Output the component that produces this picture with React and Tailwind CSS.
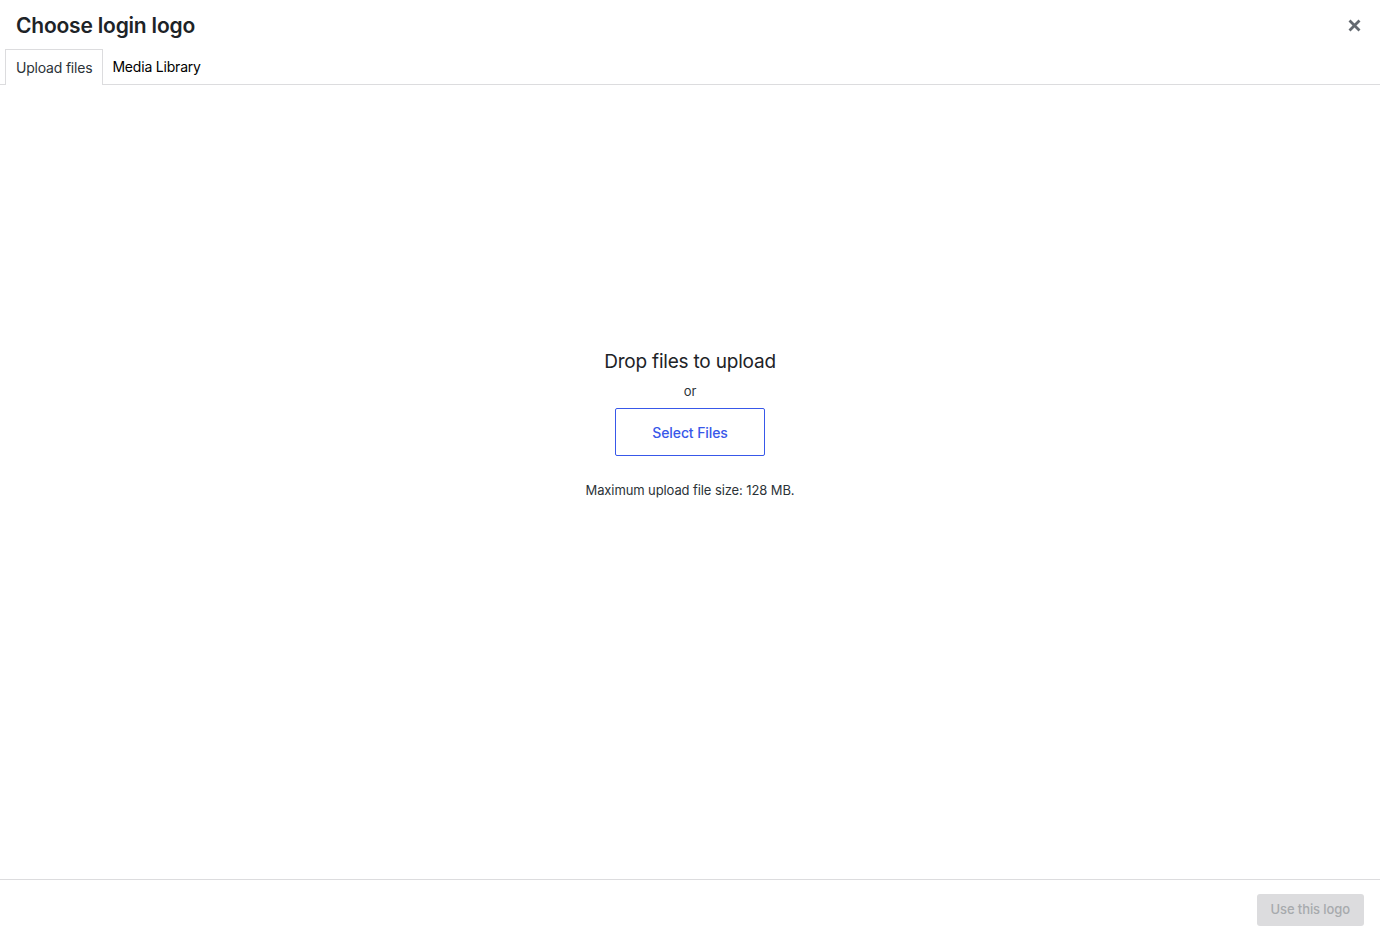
import React from "react"

function CloseIcon() {
  return (
    <svg width="13" height="13" viewBox="0 0 13 13" className="text-[#646970]">
      <path d="M2.5 2.5l8 8M10.5 2.5l-8 8" stroke="currentColor" strokeWidth="2.8" strokeLinecap="square" />
    </svg>
  )
}

export default function App() {
  return (
    <div className="flex flex-col h-[940px] w-[1380px] bg-white text-[#1d2327] font-['Inter',sans-serif]">
      {/* header */}
      <div className="flex items-center justify-between h-[50px] pl-4 pr-[14px]">
        <h1 className="text-[21px] font-semibold tracking-[-0.2px] leading-none">Choose login logo</h1>
        <button className="flex items-center justify-center w-6 h-6 mt-[1px]">
          <CloseIcon />
        </button>
      </div>

      {/* tabs */}
      <div className="flex items-end h-[35px] pl-[5px] border-b border-[#dcdcde]">
        <div className="h-[36px] -mb-px px-[10px] pb-[1px] flex items-center bg-white border border-b-0 border-[#dcdcde] text-[14px] tracking-[-0.2px] text-[#2c3338]">
          Upload files
        </div>
        <div className="h-[35px] px-[9px] flex items-center text-[14px] tracking-[-0.2px] text-black">Media Library</div>
      </div>

      {/* upload area */}
      <div className="flex-1 flex flex-col items-center pt-[263px]">
        <p className="text-[19px] leading-[28px] tracking-[-0.2px] text-[#1d2327]">Drop files to upload</p>
        <p className="text-[13px] leading-[20px] mt-[5px] text-[#2c3338]">or</p>
        <button className="mt-[7px] w-[150px] h-[48px] border border-[#3858e9] rounded-[2px] text-[14px] font-medium tracking-[-0.1px] text-[#3858e9]">
          Select Files
        </button>
        <p className="mt-[24px] text-[13px] leading-[20px] tracking-[-0.1px] text-[#2c3338]">Maximum upload file size: 128 MB.</p>
      </div>

      {/* footer */}
      <div className="flex items-center justify-end h-[61px] border-t border-[#dcdcde] pr-4">
        <button className="h-[32px] px-[14px] rounded-[3px] bg-[#dcdcde] text-[13px] font-medium tracking-[-0.1px] text-[#a7aaad]">
          Use this logo
        </button>
      </div>
    </div>
  )
}
